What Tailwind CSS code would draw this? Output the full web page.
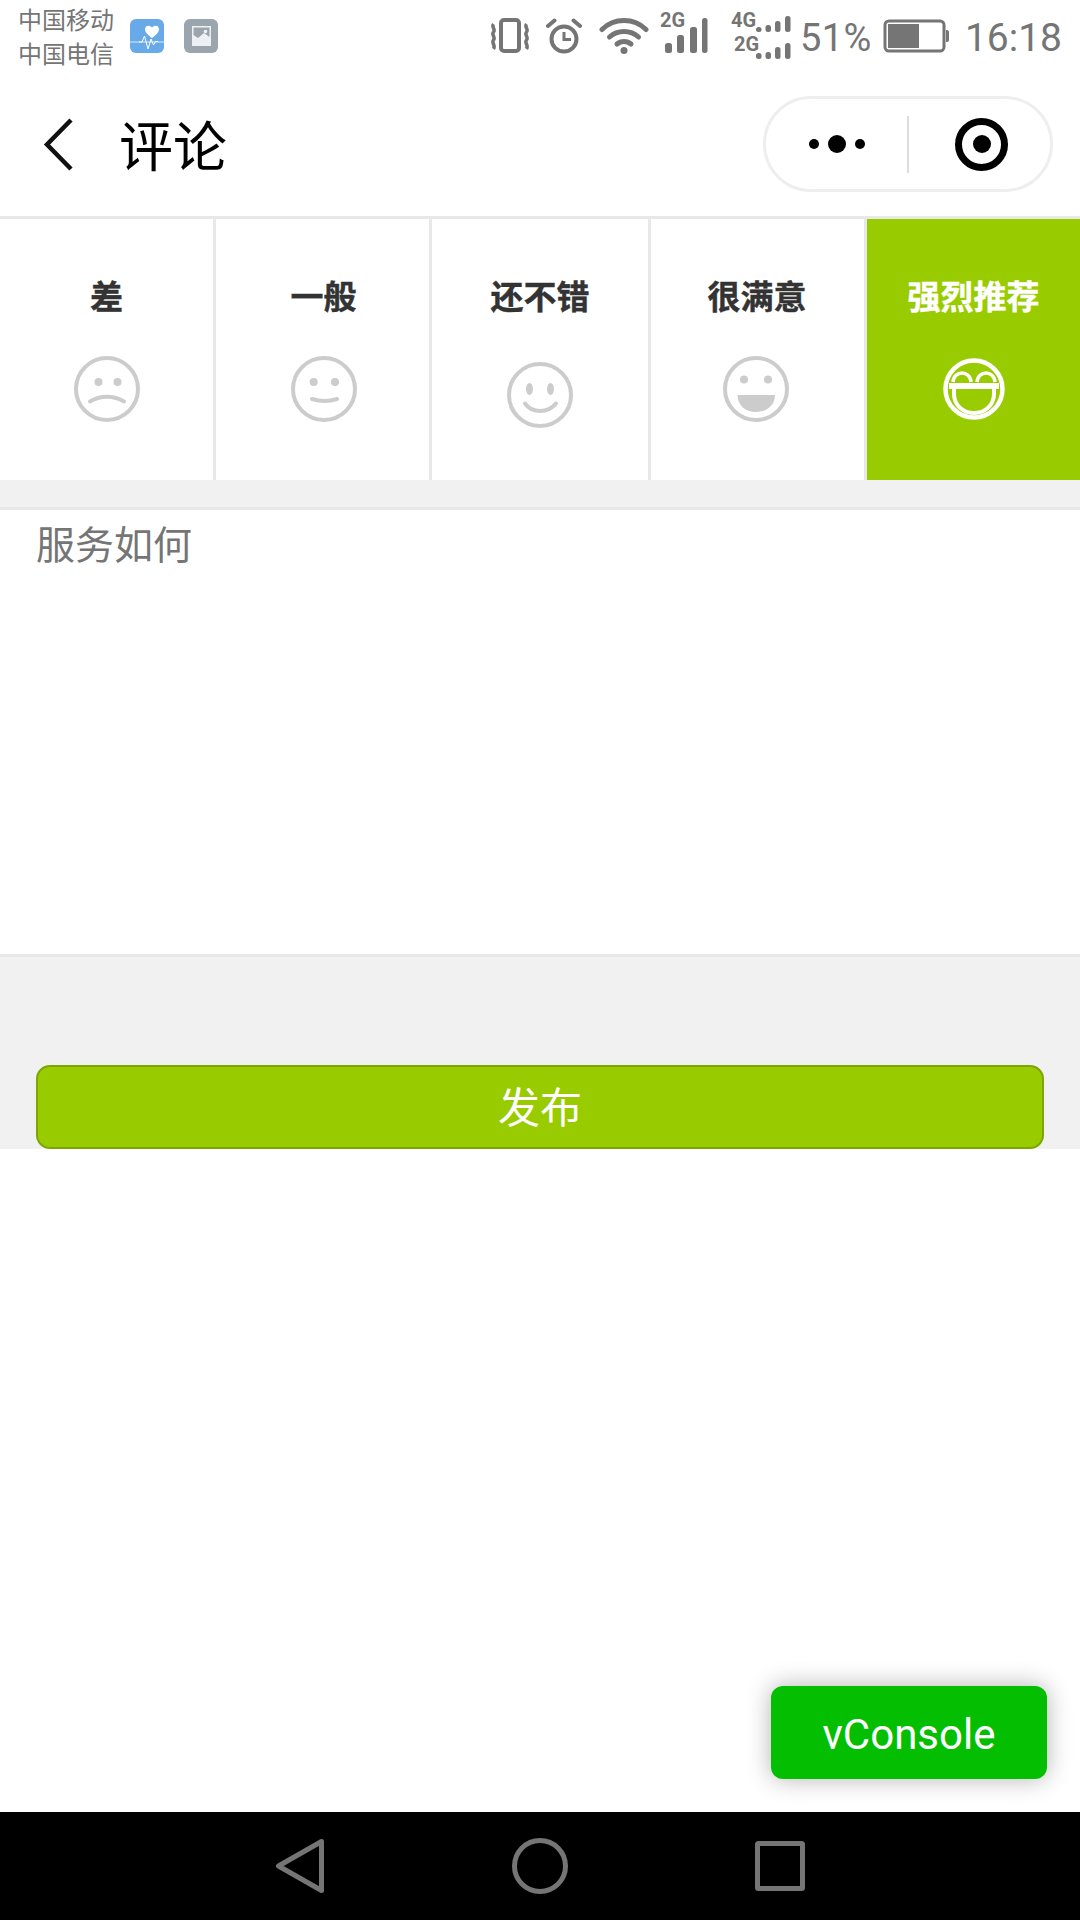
<!doctype html>
<html lang="zh-CN">

<head>
  <meta charset="UTF-8">
  <meta name="viewport" content="width=device-width, initial-scale=1.0">
  <script src="https://cdn.jsdelivr.net/npm/@tailwindcss/browser@4"></script>
  <title>评论</title>
</head>

<body class="relative w-[1080px] h-[1920px] overflow-hidden bg-white flex flex-col font-['Noto_Sans_CJK_SC','Roboto',sans-serif]">

  <!-- status bar -->
  <div class="h-[72px] flex items-center justify-between pl-[18px] pr-[18px] text-[#757575]">
    <div class="flex items-center">
      <div class="text-[24px] leading-[34px] w-[96px] whitespace-nowrap">
        <div>中国移动</div>
        <div>中国电信</div>
      </div>
      <svg class="ml-[16px]" width="34" height="34" viewBox="0 0 34 34">
        <rect width="34" height="34" rx="6" fill="#68a9e8" />
        <path d="M0 23H34" stroke="#b5d3f0" stroke-width="1.500" />
        <path d="M22 19C18 16 15 13.500 15 10C15 6.500 19.500 5.500 22 8.500C24.500 5.500 29 6.500 29 10C29 13.500 26 16 22 19Z" fill="#fff" />
        <path d="M9 23H12L14.500 17L18 30L21 20L23.500 26L25.500 22.500H28" fill="none" stroke="#fff" stroke-width="1" />
      </svg>
      <svg class="ml-[20px]" width="34" height="34" viewBox="0 0 34 34">
        <rect width="34" height="34" rx="6" fill="#9ba5ad" />
        <rect x="8" y="7" width="19" height="20" fill="#eef1f3" />
        <path d="M9.500 8.500H25.500V18L20 14L14 19L9.500 16Z" fill="#9ba5ad" />
        <circle cx="21.500" cy="12.500" r="1.800" fill="#eef1f3" />
      </svg>
    </div>
    <div class="flex items-center font-['Roboto',sans-serif]">
      <!-- vibrate -->
      <svg width="40" height="36" viewBox="0 0 40 36" fill="none" stroke="#757575">
        <rect x="11" y="2" width="18" height="31" rx="3" stroke-width="4" />
        <path d="M3.500 6C1 9 6 11 3.500 14C1 17 6 19 3.500 22C1 25 6 27 3.500 31" stroke-width="3.500" />
        <path d="M36.500 6C34 9 39 11 36.500 14C34 17 39 19 36.500 22C34 25 39 27 36.500 31" stroke-width="3.500" />
      </svg>
      <!-- alarm -->
      <svg class="ml-[16px]" width="36" height="36" viewBox="0 0 36 36" fill="none" stroke="#757575">
        <circle cx="18" cy="21" r="12.500" stroke-width="4" />
        <path d="M18 14V21.500H25" stroke-width="3" />
        <path d="M2 8L8.500 2.500M34 8L27.500 2.500" stroke-width="4" stroke-linecap="round" />
      </svg>
      <!-- wifi -->
      <svg class="ml-[17px]" width="50" height="36" viewBox="0 0 50 36" fill="none" stroke="#757575" stroke-width="5" stroke-linecap="round">
        <path d="M3 11.500C15 -0.500 35 -0.500 47 11.500" />
        <path d="M10.500 19C18.500 11.500 31.500 11.500 39.500 19" />
        <path d="M18 26C22 22.500 28 22.500 32 26" />
        <circle cx="25" cy="32.500" r="3.500" fill="#757575" stroke="none" />
      </svg>
      <!-- 2G signal -->
      <svg class="ml-[11px]" width="48" height="56" viewBox="0 -4 48 56" fill="#757575">
        <text x="0" y="15" font-family="Roboto" font-weight="700" font-size="20">2G</text>
        <rect x="5" y="31" width="7" height="10" rx="2.500" />
        <rect x="17" y="23" width="7" height="18" rx="2.500" />
        <rect x="30" y="15" width="7" height="26" rx="2.500" />
        <rect x="42" y="6" width="5.500" height="35" rx="2.500" />
      </svg>
      <!-- 4G / 2G signal -->
      <svg class="ml-[23px]" width="60" height="56" viewBox="0 -4 60 56" fill="#757575">
        <text x="0" y="15" font-family="Roboto" font-weight="700" font-size="20">4G</text>
        <text x="3" y="39" font-family="Roboto" font-weight="700" font-size="20">2G</text>
        <rect x="25" y="15" width="5.500" height="5" rx="2.500" />
        <rect x="34.500" y="13" width="5.500" height="7" rx="2.500" />
        <rect x="44" y="9" width="5.500" height="11" rx="2.500" />
        <rect x="54" y="4" width="5.500" height="16" rx="2.500" />
        <rect x="25" y="41" width="5.500" height="6" rx="2.500" />
        <rect x="34.500" y="40" width="5.500" height="7" rx="2.500" />
        <rect x="44" y="35" width="5.500" height="12" rx="2.500" />
        <rect x="54" y="31" width="5.500" height="16" rx="2.500" />
      </svg>
      <span class="ml-[9px] w-[69px] text-[38px] leading-[44px] mt-[4px] tracking-[0.5px] whitespace-nowrap">51%</span>
      <!-- battery -->
      <svg class="ml-[14px]" width="66" height="34" viewBox="0 0 66 34">
        <rect x="2" y="2" width="59" height="30" rx="4" fill="none" stroke="#757575" stroke-width="3" />
        <rect x="5" y="5" width="31" height="24" fill="#757575" />
        <path d="M63 11H64C65 11 66 12 66 13V21C66 22 65 23 64 23H63Z" fill="#757575" />
      </svg>
      <span class="ml-[16px] text-[39px] leading-[44px] mt-[4px] whitespace-nowrap">16:18</span>
    </div>
  </div>

  <!-- nav -->
  <div class="h-[144px] flex items-center justify-between pr-[27px]">
    <div class="flex items-center">
      <svg class="ml-[43px]" width="31" height="53" viewBox="0 0 31 53" fill="none" stroke="#111" stroke-width="4.500">
        <path d="M28 2L4 26.500L28 51" />
      </svg>
      <h1 class="ml-[45px] text-[54px] leading-[64px] font-normal text-black">评论</h1>
    </div>
    <div class="w-[290px] h-[96px] rounded-full border-[3px] border-[#eeeeee] flex items-center">
      <div class="w-[141px] h-full flex items-center justify-center gap-[9px]">
        <span class="w-[10px] h-[10px] rounded-full bg-black"></span>
        <span class="w-[18px] h-[18px] rounded-full bg-black"></span>
        <span class="w-[10px] h-[10px] rounded-full bg-black"></span>
      </div>
      <div class="w-[2px] h-[57px] bg-[#dddddd]"></div>
      <div class="flex-1 h-full flex items-center justify-center pl-[4px]">
        <div class="w-[53px] h-[53px] rounded-full border-[7px] border-black flex items-center justify-center">
          <span class="w-[18px] h-[18px] rounded-full bg-black"></span>
        </div>
      </div>
    </div>
  </div>

  <div class="h-[3px] bg-[#e8e8e8]"></div>

  <!-- rating tabs -->
  <div class="h-[261px] grid grid-cols-[216px_216px_219px_216px_213px] text-[33px] leading-[44px] font-bold text-[#333333] [-webkit-text-stroke:0.4px]">
    <div class="border-r-[3px] border-[#e8e8e8] flex flex-col items-center pt-[54px]">
      <span>差</span>
      <svg class="mt-[39px]" width="66" height="66" viewBox="0 0 66 66" fill="none" stroke="#cccccc" stroke-width="4" stroke-linecap="round">
        <circle cx="33" cy="33" r="31" />
        <circle cx="24.500" cy="26" r="4" fill="#cccccc" stroke="none" />
        <circle cx="43.500" cy="26" r="4" fill="#cccccc" stroke="none" />
        <path d="M16 45.500C26 39 40 39 50 45.500" />
      </svg>
    </div>
    <div class="border-r-[3px] border-[#e8e8e8] flex flex-col items-center pt-[54px]">
      <span class="ml-[2px]">一般</span>
      <svg class="mt-[39px] ml-[2px]" width="66" height="66" viewBox="0 0 66 66" fill="none" stroke="#cccccc" stroke-width="4" stroke-linecap="round">
        <circle cx="33" cy="33" r="31" />
        <circle cx="22.700" cy="26" r="4" fill="#cccccc" stroke="none" />
        <circle cx="44" cy="26" r="4" fill="#cccccc" stroke="none" />
        <path d="M21 43C29 45.500 38 45.500 46 43" />
      </svg>
    </div>
    <div class="border-r-[3px] border-[#e8e8e8] flex flex-col items-center pt-[54px]">
      <span>还不错</span>
      <svg class="mt-[45px]" width="66" height="66" viewBox="0 0 66 66" fill="none" stroke="#cccccc" stroke-width="4" stroke-linecap="round">
        <circle cx="33" cy="33" r="31" />
        <ellipse cx="22.500" cy="27" rx="3.500" ry="6" fill="#cccccc" stroke="none" />
        <ellipse cx="43.500" cy="27" rx="3.500" ry="6" fill="#cccccc" stroke="none" />
        <path d="M18 41.500C25 51.500 41 51.500 49 41.500" />
      </svg>
    </div>
    <div class="border-r-[3px] border-[#e8e8e8] flex flex-col items-center pt-[54px]">
      <span class="mr-[1px]">很满意</span>
      <svg class="mt-[39px] mr-[3px]" width="66" height="66" viewBox="0 0 66 66" fill="none" stroke="#cccccc" stroke-width="4" stroke-linecap="round">
        <circle cx="33" cy="33" r="31" />
        <circle cx="21" cy="23.500" r="4" fill="#cccccc" stroke="none" />
        <circle cx="45" cy="23.500" r="4" fill="#cccccc" stroke="none" />
        <path d="M14.500 39H52C52 49 44 56 33 56C22 56 14.500 49 14.500 39Z" fill="#cccccc" stroke="none" />
      </svg>
    </div>
    <div class="bg-[#99cc00] text-white flex flex-col items-center pt-[54px]">
      <span>强烈推荐</span>
      <svg class="mt-[41px]" width="62" height="62" viewBox="0 0 62 62" fill="none" stroke="#ffffff" stroke-width="4.500">
        <circle cx="31" cy="31" r="28.500" />
        <path d="M10 24C11 12 27 12 28 24" stroke-width="3.500" />
        <path d="M34 24C35 12 51 12 52 24" stroke-width="3.500" />
        <path d="M11 29V36C11 47 20 55 31 55C42 55 51 47 51 36V29Z" stroke-width="4" />
        <rect x="6" y="25" width="50" height="6" fill="#ffffff" stroke="none" />
      </svg>
    </div>
  </div>

  <div class="h-[27px] bg-[#f1f1f1]"></div>
  <div class="h-[3px] bg-[#e8e8e8]"></div>

  <textarea
    class="block w-full h-[444px] resize-none outline-none px-[36px] pt-[4px] text-[39px] leading-[56px] text-[#333333] placeholder:text-[#757575] placeholder:opacity-100"
    placeholder="服务如何"></textarea>

  <div class="h-[3px] bg-[#e8e8e8]"></div>

  <div class="bg-[#f1f1f1] pt-[108px] px-[36px]">
    <button
      class="block w-full h-[84px] pb-[4px] rounded-[14px] border-2 border-[#7ca600] bg-[#99cc00] text-white text-[42px] leading-[76px]">发布</button>
  </div>

  <div class="flex-1"></div>

  <!-- android nav -->
  <div class="h-[108px] bg-black flex items-center">
    <svg class="ml-[276px]" width="48" height="54" viewBox="0 0 48 54" fill="none" stroke="#757575" stroke-width="5" stroke-linejoin="round">
      <path d="M45.500 2.500V51.500L2.500 27Z" />
    </svg>
    <svg class="ml-[188px]" width="56" height="56" viewBox="0 0 56 56" fill="none" stroke="#757575" stroke-width="5">
      <circle cx="28" cy="28" r="25.500" />
    </svg>
    <svg class="ml-[187px]" width="50" height="50" viewBox="0 0 50 50" fill="none" stroke="#757575" stroke-width="5" stroke-linejoin="round">
      <rect x="2.500" y="2.500" width="45" height="45" rx="1" />
    </svg>
  </div>

  <!-- floating vConsole switch -->
  <div
    class="absolute left-[771px] top-[1686px] w-[276px] h-[93px] pt-[3px] rounded-[12px] bg-[#04be02] text-white text-[42px] flex items-center justify-center font-['Roboto',sans-serif] shadow-[0_0_24px_rgba(0,0,0,0.3)]">
    vConsole</div>

</body>

</html>
